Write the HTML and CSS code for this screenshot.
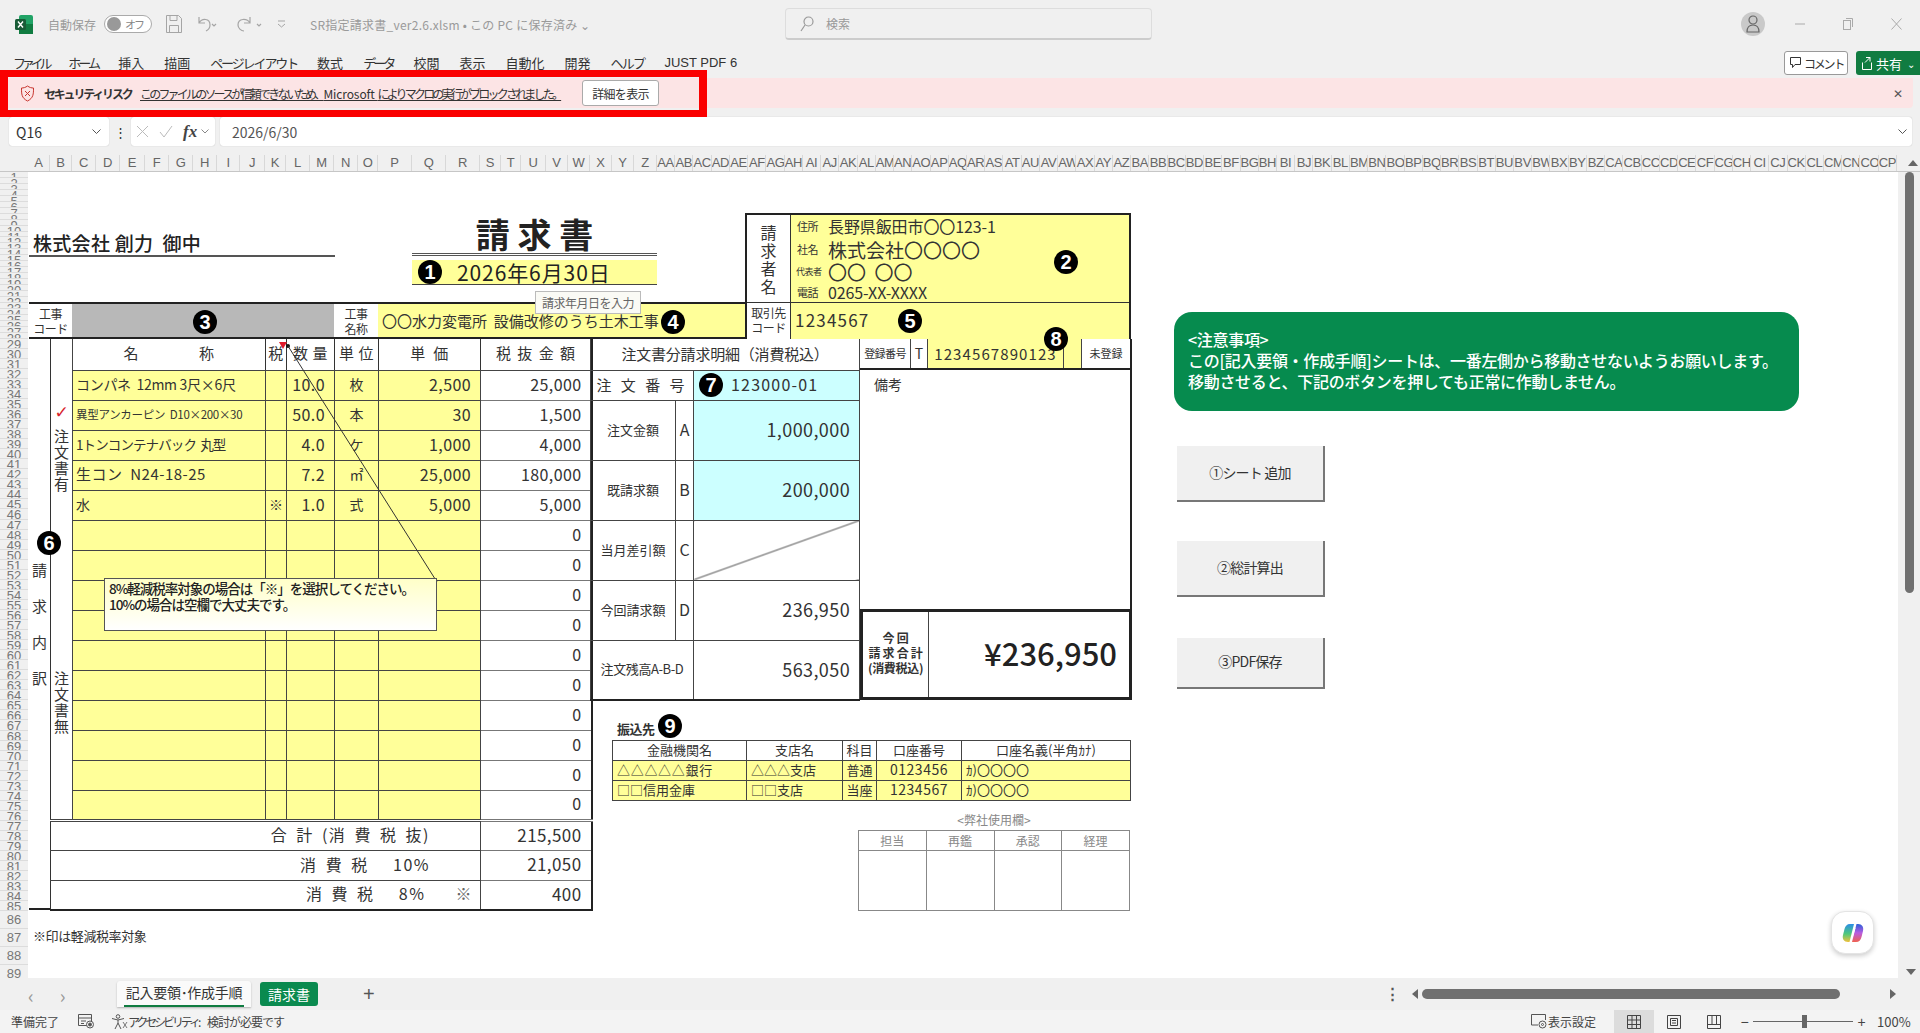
FILE: index.html
```html
<!DOCTYPE html>
<html lang="ja">
<head>
<meta charset="UTF-8">
<title>SR指定請求書_ver2.6.xlsm</title>
<link rel="stylesheet" href="styles.css">
</head>
<body>

<div class="titlebar">
  <svg class="xl-logo" width="18" height="19" viewBox="0 0 18 19"><rect x="4" y="0" width="14" height="19" rx="2" fill="#21a366"/><rect x="4" y="9" width="14" height="10" fill="#107c41"/><rect x="0" y="4" width="11" height="11" rx="1.5" fill="#185c37"/><path d="M3 6.5l5 6M8 6.5l-5 6" stroke="#fff" stroke-width="1.4"/></svg>
  <span class="t-gray t-auto">自動保存</span>
  <span class="toggle"><b></b><em>オフ</em></span>
  <svg class="t-save" width="16" height="18" viewBox="0 0 16 18" fill="none" stroke="#a5a5a5"><path d="M.5.5h12l3 3v14H.5z"/><path d="M4 .5v5h7v-5M3.500 17.500v-7h9v7"/></svg>
  <svg class="t-undo" width="23" height="18" viewBox="0 0 23 18" fill="none" stroke="#a5a5a5" stroke-width="1.2"><path d="M4 2v6h6M4 8c3-5 11-5 11 2 0 3-2 5-4 6"/><path d="M19 9l2 2 2-2" transform="translate(-2 0)"/></svg>
  <svg class="t-redo" width="27" height="18" viewBox="0 0 27 18" fill="none" stroke="#a5a5a5" stroke-width="1.2"><path d="M15 2v6H9M15 8C12 3 3 3 3 10c0 3 3 6 6 6"/><path d="M22 9l2 2 2-2"/></svg>
  <svg class="t-cust" width="9" height="9" viewBox="0 0 9 9" fill="none" stroke="#a5a5a5"><path d="M1 1h7M1 4l3.500 3L8 4"/></svg>
  <span class="t-gray t-file">SR指定請求書_ver2.6.xlsm • この PC に保存済み ⌄</span>
  <div class="search">
    <svg width="14" height="16" viewBox="0 0 14 16" fill="none" stroke="#999" stroke-width="1.2"><circle cx="8.500" cy="5.500" r="4.500"/><path d="M5 9l-4 6"/></svg>
    <span>検索</span>
  </div>
  <div class="avatar"><svg width="14" height="18" viewBox="0 0 14 18" fill="none" stroke="#666" stroke-width="1.200"><circle cx="7" cy="5" r="4"/><path d="M1 17c0-5 2-7 6-7s6 2 6 7z"/></svg></div>
  <div class="winctl">
    <svg width="10" height="10" viewBox="0 0 10 10" stroke="#aaa"><path d="M0 5h10"/></svg>
    <svg width="10" height="12" viewBox="0 0 10 12" fill="none" stroke="#aaa"><rect x=".5" y="2.500" width="7" height="9"/><path d="M3 .5h6.500V9"/></svg>
    <svg width="11" height="12" viewBox="0 0 11 12" stroke="#aaa"><path d="M.5.5l10 11M10.500.5l-10 11"/></svg>
  </div>
</div>

<div class="menubar">
  <nav class="tabs">
    <a class="kana k-file">ファイル</a>
    <a class="kana">ホーム</a>
    <a>挿入</a>
    <a>描画</a>
    <a class="kana k-page">ページレイアウト</a>
    <a>数式</a>
    <a class="kana">データ</a>
    <a>校閲</a>
    <a>表示</a>
    <a>自動化</a>
    <a>開発</a>
    <a class="kana k-help">ヘルプ</a>
    <a class="latin">JUST PDF 6</a>
  </nav>
  <div class="menu-right">
    <button class="comment-btn"><svg width="11" height="12" viewBox="0 0 11 12" fill="none" stroke="#333"><path d="M.5.5h10v7H5L2.500 10.500V7.500h-2z"/></svg>コメント</button>
    <button class="share-btn"><svg width="11" height="13" viewBox="0 0 11 13" fill="none" stroke="#fff"><path d="M.5 5.500v7h9v-7M3 5.500l5-5M8 .5H4M8 .5v4"/></svg>共有<i>⌄</i></button>
  </div>
</div>

<div class="msgbar">
  <svg class="shield" width="15" height="17" viewBox="0 0 15 17" fill="none" stroke="#c8352f"><path d="M7.500 1c2 1.500 4 2 6 2 0 6 0 10-6 13C1.500 13 1.500 9 1.500 3c2 0 4-.5 6-2z"/><path d="M5 6l5 5M10 6l-5 5"/></svg>
  <strong>セキュリティリスク</strong>
  <a>このファイルのソースが信頼できないため、<span>Microsoft </span>によりマクロの実行がブロックされました。</a>
  <button>詳細を表示</button>
  <span class="msg-close">✕</span>
</div>

<div class="fxrow">
  <div class="namebox"><span>Q16</span><svg width="9" height="6" viewBox="0 0 9 6" fill="none" stroke="#555"><path d="M.5.5l4 4 4-4"/></svg></div>
  <span class="fx-dots">⋮</span>
  <div class="fxbtns">
    <svg width="13" height="13" viewBox="0 0 13 13" stroke="#bbb"><path d="M1 1l11 11M12 1L1 12"/></svg>
    <svg width="14" height="13" viewBox="0 0 14 13" fill="none" stroke="#bbb"><path d="M1 7l4 5 8-11"/></svg>
    <em>fx</em>
    <svg width="8" height="5" viewBox="0 0 8 5" fill="none" stroke="#888"><path d="M.5.5l3.500 3.500L7.500.5"/></svg>
  </div>
  <div class="fxinput"><span>2026/6/30</span><svg width="9" height="6" viewBox="0 0 9 6" fill="none" stroke="#555"><path d="M.5.5l4 4 4-4"/></svg></div>
</div>

<div class="colhead">
  <div class="corner"></div>
  <div class="cols">
    <i>A</i><i>B</i><i>C</i><i>D</i><i>E</i><i>F</i><i>G</i><i>H</i><i>I</i><i>J</i><i>K</i><i>L</i><i>M</i><i>N</i><i>O</i><i>P</i><i>Q</i><i>R</i><i>S</i><i>T</i><i>U</i><i>V</i><i>W</i><i>X</i><i>Y</i><i>Z</i>
    <i>AA</i><i>AB</i><i>AC</i><i>AD</i><i>AE</i><i>AF</i><i>AG</i><i>AH</i><i>AI</i><i>AJ</i><i>AK</i><i>AL</i><i>AM</i><i>AN</i><i>AO</i><i>AP</i><i>AQ</i><i>AR</i><i>AS</i><i>AT</i><i>AU</i><i>AV</i><i>AW</i><i>AX</i><i>AY</i><i>AZ</i>
    <i>BA</i><i>BB</i><i>BC</i><i>BD</i><i>BE</i><i>BF</i><i>BG</i><i>BH</i><i>BI</i><i>BJ</i><i>BK</i><i>BL</i><i>BM</i><i>BN</i><i>BO</i><i>BP</i><i>BQ</i><i>BR</i><i>BS</i><i>BT</i><i>BU</i><i>BV</i><i>BW</i><i>BX</i><i>BY</i><i>BZ</i>
    <i>CA</i><i>CB</i><i>CC</i><i>CD</i><i>CE</i><i>CF</i><i>CG</i><i>CH</i><i>CI</i><i>CJ</i><i>CK</i><i>CL</i><i>CM</i><i>CN</i><i>CO</i><i>CP</i>
  </div>
  <div class="vs-up"></div>
</div>

<div class="workarea">
  <div class="rows">
    <i>1</i><i>2</i><i>3</i><i>4</i><i>5</i><i>6</i><i>7</i><i>8</i><i>9</i><i>10</i><i>11</i><i>12</i><i>13</i><i>14</i><i>15</i><i>16</i><i>17</i><i>18</i><i>19</i><i>20</i><i>21</i><i>22</i><i>23</i><i>24</i><i>25</i><i>26</i><i>27</i><i>28</i>
    <i>29</i><i>30</i><i>31</i><i>32</i><i>33</i><i>34</i><i>35</i><i>36</i><i>37</i><i>38</i><i>39</i><i>40</i><i>41</i><i>42</i><i>43</i><i>44</i><i>45</i><i>46</i><i>47</i><i>48</i><i>49</i><i>50</i><i>51</i><i>52</i><i>53</i><i>54</i><i>55</i><i>56</i><i>57</i><i>58</i><i>59</i><i>60</i><i>61</i><i>62</i><i>63</i><i>64</i><i>65</i><i>66</i><i>67</i><i>68</i><i>69</i><i>70</i><i>71</i><i>72</i><i>73</i><i>74</i><i>75</i><i>76</i><i>77</i><i>78</i><i>79</i><i>80</i><i>81</i><i>82</i><i>83</i><i>84</i><i>85</i>
    <i>86</i><i>87</i><i>88</i><i>89</i>
  </div>

  <div class="canvas">
    <div class="invoice">

      <div class="head">
        <div class="head-left">
          <div class="head-top">
            <div class="to-name">株式会社 創力&nbsp;&nbsp;御中</div>
            <div class="title-block">
              <div class="title">請 求 書</div>
              <div class="issue-date">2026年6月30日</div>
            </div>
          </div>
          <div class="kouji">
            <div class="k-label">工事<br>コード</div>
            <div class="k-gray"></div>
            <div class="k-label k-label2">工事<br>名称</div>
            <div class="k-name">〇〇水力変電所&nbsp;&nbsp;設備改修のうち土木工事</div>
          </div>
        </div>
        <div class="issuer">
          <div class="issuer-main">
            <div class="issuer-label"><span>請</span><span>求</span><span>者</span><span>名</span></div>
            <div class="issuer-body">
              <div class="ib-row"><small>住所</small><span class="ib-addr">長野県飯田市〇〇123-1</span></div>
              <div class="ib-row"><small>社名</small><span class="ib-co">株式会社〇〇〇〇</span></div>
              <div class="ib-row"><small class="tiny">代表者</small><span class="ib-co">〇〇&nbsp;&nbsp;〇〇</span></div>
              <div class="ib-row"><small>電話</small><span class="ib-addr">0265-XX-XXXX</span></div>
            </div>
          </div>
          <div class="issuer-code">
            <div class="ic-label">取引先<br>コード</div>
            <div class="ic-val">1234567</div>
          </div>
        </div>
      </div>

      <div class="bodyrow">
        <div class="leftpart">
          <div class="vside">
            <span>請</span><span>求</span><span>内</span><span>訳</span>
          </div>
          <table class="detail">
            <colgroup><col class="c1"><col class="c2"><col class="c3"><col class="c4"><col class="c5"><col class="c6"><col class="c7"></colgroup>
            <tr class="hrow">
              <td rowspan="16" class="order-side">
                <span class="chk">✓</span>
                <span class="os-a">注<br>文<br>書<br>有</span>
                <span class="os-b">注<br>文<br>書<br>無</span>
              </td>
              <th>名<span class="gap-wide"></span>称</th><th>税</th><th>数 量</th><th>単 位</th><th>単&nbsp;&nbsp;価</th><th class="w">税 抜 金 額</th>
            </tr>
            <tr><td class="y n">コンパネ&nbsp;&nbsp;12mm 3尺×6尺</td><td class="y"></td><td class="y q">10.0</td><td class="y u">枚</td><td class="y p">2,500</td><td class="a">25,000</td></tr>
            <tr><td class="y n sm">異型アンカーピン&nbsp;&nbsp;D10×200×30</td><td class="y"></td><td class="y q">50.0</td><td class="y u">本</td><td class="y p">30</td><td class="a">1,500</td></tr>
            <tr><td class="y n n3">1トンコンテナバック&nbsp;&nbsp;丸型</td><td class="y"></td><td class="y q">4.0</td><td class="y u">ケ</td><td class="y p">1,000</td><td class="a">4,000</td></tr>
            <tr><td class="y n n4">生コン&nbsp;&nbsp;N24-18-25</td><td class="y"></td><td class="y q">7.2</td><td class="y u">㎡</td><td class="y p">25,000</td><td class="a">180,000</td></tr>
            <tr><td class="y n">水</td><td class="y u">※</td><td class="y q">1.0</td><td class="y u">式</td><td class="y p">5,000</td><td class="a">5,000</td></tr>
            <tr><td class="y"></td><td class="y"></td><td class="y"></td><td class="y"></td><td class="y"></td><td class="a">0</td></tr>
            <tr><td class="y"></td><td class="y"></td><td class="y"></td><td class="y"></td><td class="y"></td><td class="a">0</td></tr>
            <tr><td class="y"></td><td class="y"></td><td class="y"></td><td class="y"></td><td class="y"></td><td class="a">0</td></tr>
            <tr><td class="y"></td><td class="y"></td><td class="y"></td><td class="y"></td><td class="y"></td><td class="a">0</td></tr>
            <tr><td class="y"></td><td class="y"></td><td class="y"></td><td class="y"></td><td class="y"></td><td class="a">0</td></tr>
            <tr><td class="y"></td><td class="y"></td><td class="y"></td><td class="y"></td><td class="y"></td><td class="a">0</td></tr>
            <tr><td class="y"></td><td class="y"></td><td class="y"></td><td class="y"></td><td class="y"></td><td class="a">0</td></tr>
            <tr><td class="y"></td><td class="y"></td><td class="y"></td><td class="y"></td><td class="y"></td><td class="a">0</td></tr>
            <tr><td class="y"></td><td class="y"></td><td class="y"></td><td class="y"></td><td class="y"></td><td class="a">0</td></tr>
            <tr><td class="y"></td><td class="y"></td><td class="y"></td><td class="y"></td><td class="y"></td><td class="a">0</td></tr>
            <tr class="sum first"><td colspan="6" class="s-label">合 計 (消 費 税 抜)</td><td class="a sum-v">215,500</td></tr>
            <tr class="sum"><td colspan="6" class="s-label">消 費 税&nbsp;&nbsp;&nbsp;10%</td><td class="a sum-v">21,050</td></tr>
            <tr class="sum last"><td colspan="6" class="s-label s-last">消 費 税&nbsp;&nbsp;&nbsp;8%<span>※</span></td><td class="a sum-v">400</td></tr>
          </table>
        </div>

        <div class="rightpart">
          <div class="rp-top">
            <table class="order">
              <colgroup><col class="o1"><col class="o2"><col class="o3"></colgroup>
              <tr class="o-h"><th colspan="3">注文書分請求明細（消費税込）</th></tr>
              <tr class="o-n"><th colspan="2" class="o-no">注 文 番 号</th><td class="cy o-num">123000-01</td></tr>
              <tr><th>注文金額</th><td class="letter">A</td><td class="cy v">1,000,000</td></tr>
              <tr><th>既請求額</th><td class="letter">B</td><td class="cy v">200,000</td></tr>
              <tr><th>当月差引額</th><td class="letter">C</td><td class="diag"></td></tr>
              <tr><th>今回請求額</th><td class="letter">D</td><td class="v">236,950</td></tr>
              <tr><th colspan="2" class="o-bal">注文残高A-B-D</th><td class="v">563,050</td></tr>
            </table>
            <div class="rp-col">
              <div class="reg">
                <div class="r1">登録番号</div>
                <div class="r2">T</div>
                <div class="r3">1234567890123</div>
                <div class="r4"></div>
                <div class="r5">未登録</div>
              </div>
              <div class="memo">備考</div>
              <div class="grand">
                <div class="g-label">今 回<br>請 求 合 計<br>(消費税込)</div>
                <div class="g-val">¥236,950</div>
              </div>
            </div>
          </div>

          <div class="rp-bottom">
            <div class="bank-title">振込先</div>
            <table class="bank">
              <colgroup><col class="b1"><col class="b2"><col class="b3"><col class="b4"><col class="b5"></colgroup>
              <tr><th>金融機関名</th><th>支店名</th><th>科目</th><th>口座番号</th><th>口座名義(半角ｶﾅ)</th></tr>
              <tr><td class="tri">△△△△△銀行</td><td>△△△支店</td><td class="ctr">普通</td><td class="ctr num">0123456</td><td>ｶ)〇〇〇〇</td></tr>
              <tr><td>□□信用金庫</td><td>□□支店</td><td class="ctr">当座</td><td class="ctr num">1234567</td><td>ｶ)〇〇〇〇</td></tr>
            </table>
            <div class="stamp-title">&lt;弊社使用欄&gt;</div>
            <table class="stamp">
              <tr><th>担当</th><th>再鑑</th><th>承認</th><th>経理</th></tr>
              <tr><td></td><td></td><td></td><td></td></tr>
            </table>
          </div>
        </div>
      </div>

      <div class="footnote">※印は軽減税率対象</div>
    </div>

    <aside class="side">
      <div class="notice">
        &lt;注意事項&gt;<br>
        この[記入要領・作成手順]シートは、一番左側から移動させないようお願いします。<br>
        移動させると、下記のボタンを押しても正常に作動しません。
      </div>
      <div class="macro m1">①シート 追加</div>
      <div class="macro m2">②総計算出</div>
      <div class="macro m3">③PDF保存</div>
    </aside>

    <!-- over the cells -->
    <span class="badge b-1">1</span>
    <span class="badge b-2">2</span>
    <span class="badge b-3">3</span>
    <span class="badge b-4">4</span>
    <span class="badge b-5">5</span>
    <span class="badge b-6">6</span>
    <span class="badge b-7">7</span>
    <span class="badge b-8">8</span>
    <span class="badge b-9">9</span>
    <div class="tip">請求年月日を入力</div>
    <svg class="leader" width="160" height="245" viewBox="0 0 160 245"><path d="M0 3l8 0-4 7z" fill="#e01b2c"/><circle cx="9" cy="7" r="2" fill="#111"/><path d="M9 7L158 243" stroke="#333" fill="none"/></svg>
    <div class="callout">8%軽減税率対象の場合は「※」を選択してください。<br>10%の場合は空欄で大丈夫です。</div>
    <div class="copilot"><svg width="22" height="20" viewBox="0 0 22 20"><defs><linearGradient id="cpa" x1="0" y1="0" x2="0" y2="1"><stop offset="0" stop-color="#2a8ee8"/><stop offset=".55" stop-color="#4fc87a"/><stop offset="1" stop-color="#f2c23c"/></linearGradient><linearGradient id="cpb" x1="0" y1="0" x2="0" y2="1"><stop offset="0" stop-color="#2b5fd9"/><stop offset=".5" stop-color="#b85ce0"/><stop offset="1" stop-color="#f0604f"/></linearGradient></defs><path d="M8 1h4L7.500 19H6C2 19 0 16 1 12l1.500-6C3.200 3 5 1 8 1z" fill="url(#cpa)"/><path d="M14 19h-4l4.500-18H16c4 0 6 3 5 7l-1.500 6c-.7 3-2.500 5-5.500 5z" fill="url(#cpb)"/><path d="M12.500 5l-3 10h1l3-10z" fill="#fff"/></svg></div>
  </div>

  <div class="vscroll"><b></b><u></u></div>
</div>

<div class="sheetbar">
  <span class="nav-arrows"><i>‹</i><i>›</i></span>
  <div class="stab active"><span>記入要領･作成手順</span></div>
  <div class="stab green">請求書</div>
  <span class="add">+</span>
  <span class="sb-dots">⋮</span>
  <div class="hscroll"><i class="al"></i><b></b><i class="ar"></i></div>
</div>

<div class="statusbar">
  <span class="st-ready">準備完了</span>
  <svg class="st-macro" width="16" height="15" viewBox="0 0 16 15" fill="none" stroke="#555"><path d="M.5.5h13v11h-13zM.5 4h13M3 7h5M3 9.500h3"/><circle cx="12" cy="10.500" r="3.500" fill="#f0f0f0"/><circle cx="12" cy="10.500" r="1.500" fill="#555"/></svg>
  <svg class="st-acc" width="17" height="16" viewBox="0 0 17 16" fill="none" stroke="#555"><circle cx="7" cy="2.500" r="1.800"/><path d="M1 4.500l6 1.500 6-1.500M7 6v3l-3 6M7 9l3 6"/><path d="M12 8l4 6M16 8l-4 6" stroke="#777"/></svg>
  <span class="st-acc-k">アクセシビリティ:</span>
  <span class="st-acc-t">検討が必要です</span>
  <div class="st-right">
    <svg class="st-disp" width="17" height="15" viewBox="0 0 17 15" fill="none" stroke="#555"><path d="M7 11H.5V.5h14V6"/><circle cx="11.500" cy="10.500" r="3.500"/><circle cx="11.500" cy="10.500" r="1"/></svg>
    <span class="st-disp-t">表示設定</span>
    <span class="view on"><svg width="14" height="14" viewBox="0 0 14 14" fill="none" stroke="#444"><path d="M.5.5h13v13H.5zM.5 5h13M.5 9.500h13M5 .5v13M9.500.5v13"/></svg></span>
    <span class="view"><svg width="14" height="14" viewBox="0 0 14 14" fill="none" stroke="#444"><path d="M.5.5h13v13H.5zM3.500 3.500h7v7h-7zM5 5.500h4M5 8h4"/></svg></span>
    <span class="view"><svg width="14" height="14" viewBox="0 0 14 14" fill="none" stroke="#444"><path d="M.5.5h13v13H.5zM.5 9.500h13M5 .5v9M9.500.5v9"/></svg></span>
    <span class="zm zm-minus">−</span>
    <span class="slider"><b></b></span>
    <span class="zm">+</span>
    <span class="pct">100%</span>
  </div>
</div>

<!-- red frame the author drew on the screenshot -->
<div class="redframe"></div>

</body>
</html>
```

FILE: styles.css
```css
html, body {
	margin: 0;
	padding: 0;
}
body {
	position: relative;
	width: 1920px;
	height: 1033px;
	overflow: hidden;
	background: #f0f0f0;
	color: #333;
	font-family: "Noto Sans CJK JP", "Liberation Sans", sans-serif;
	font-size: 13px;
}
i, em {
	font-style: normal;
}
table {
	border-collapse: collapse;
	table-layout: fixed;
}
th {
	font-weight: normal;
}
td, th {
	padding: 0;
	box-sizing: border-box;
}

/* title bar */
.titlebar {
	height: 48px;
	display: flex;
	align-items: center;
}
.xl-logo { margin-left: 15px; }
.t-gray { color: #9a9a9a; white-space: nowrap; }
.t-auto { margin-left: 15px; width: 50px; font-size: 12px; letter-spacing: 0; }
.toggle {
	margin-left: 6px;
	width: 48px;
	height: 18px;
	border: 1px solid #aaa;
	border-radius: 10px;
	background: #fff;
	display: flex;
	align-items: center;
	box-sizing: border-box;
	color: #888;
	font-size: 11px;
}
.toggle b {
	width: 14px;
	height: 14px;
	margin: 0 4px 0 2px;
	border-radius: 50%;
	background: #999;
}
.toggle em { letter-spacing: -2px; }
.t-save { margin-left: 14px; }
.t-undo { margin-left: 13px; }
.t-redo { margin-left: 17px; }
.t-cust { margin-left: 15px; }
.t-file { margin-left: 24px; width: 280px; font-size: 12px; letter-spacing: .25px; }
.search {
	margin-left: 195px;
	width: 367px;
	height: 32px;
	box-sizing: border-box;
	border: 1px solid #ddd;
	border-bottom: 2px solid #ccc;
	border-radius: 4px;
	display: flex;
	align-items: center;
	padding-left: 14px;
	gap: 12px;
	color: #999;
	font-size: 12px;
}
.avatar {
	margin-left: 589px;
	width: 24px;
	height: 24px;
	border-radius: 50%;
	background: #c9c9c9;
	display: flex;
	align-items: center;
	justify-content: center;
}
.winctl {
	margin-left: 30px;
	display: flex;
	align-items: center;
	gap: 38px;
}

/* tab row */
.menubar {
	height: 30px;
	display: flex;
	justify-content: space-between;
}
.tabs {
	display: flex;
	gap: 20px;
	padding: 6px 0 0 13px;
	font-size: 13px;
	line-height: 18px;
	white-space: nowrap;
}
.tabs .kana { letter-spacing: -2.900px; }
.tabs .k-file { letter-spacing: -4.200px; }
.tabs .k-page { letter-spacing: -2.100px; }
.tabs .k-help { letter-spacing: -1.700px; }
.tabs .latin { font-family: "Liberation Sans", sans-serif; }
.menu-right {
	display: flex;
	gap: 8px;
	padding-top: 3px;
	height: 24px;
}
.comment-btn, .share-btn {
	height: 24px;
	box-sizing: border-box;
	font: inherit;
	font-size: 12px;
	display: flex;
	align-items: center;
	padding: 0;
	white-space: nowrap;
}
.comment-btn {
	width: 64px;
	border: 1px solid #999;
	border-radius: 3px;
	background: #fff;
	color: #333;
	padding-left: 5px;
	gap: 3px;
	letter-spacing: -2.2px;
}
.share-btn {
	width: 64px;
	border: 0;
	border-radius: 3px 0 0 3px;
	background: #107c41;
	color: #fff;
	padding-left: 6px;
	gap: 3px;
	font-size: 13px;
}
.share-btn i { font-size: 10px; margin-left: 2px; }

/* message bar */
.msgbar {
	height: 30px;
	margin-right: 7px;
	background: #fce4e5;
	border-radius: 0 0 4px 0;
	display: flex;
	align-items: center;
	font-size: 12px;
	white-space: nowrap;
	position: relative;
}
.shield { margin-left: 20px; }
.msgbar strong { margin-left: 9px; width: 90px; letter-spacing: -2.2px; font-weight: 700; }
.msgbar a { margin-left: 6px; width: 442px; text-decoration: underline; letter-spacing: -2.800px; }
.msgbar a span { letter-spacing: -.1px; }
.msgbar button {
	width: 77px;
	height: 26px;
	border: 1px solid #aaa;
	border-radius: 3px;
	background: #fff;
	font: inherit;
	color: #333;
	padding: 0;
	letter-spacing: -.7px;
}
.msg-close { position: absolute; right: 10px; top: 6px; color: #555; font-size: 12px; }

/* formula row */
.fxrow {
	height: 29px;
	margin: 9px 8px 9px 9px;
	display: flex;
	align-items: stretch;
}
.namebox, .fxbtns, .fxinput {
	background: #fff;
	border-radius: 3px;
	box-shadow: 0 0 1px #aaa;
	display: flex;
	align-items: center;
}
.namebox {
	width: 100px;
	padding: 0 8px 0 7px;
	box-sizing: border-box;
	justify-content: space-between;
	font-size: 14px;
}
.fx-dots { width: 22px; text-align: center; line-height: 29px; }
.fxbtns {
	width: 84px;
	padding: 0 5px;
	box-sizing: border-box;
	gap: 10px;
}
.fxbtns em {
	font-family: "Liberation Serif", serif;
	font-style: italic;
	font-weight: 700;
	font-size: 17px;
	color: #444;
}
.fxbtns svg:last-child { margin-left: -6px; }
.fxinput {
	flex: 1;
	margin-left: 5px;
	padding: 0 5px 0 12px;
	justify-content: space-between;
	font-size: 14px;
	color: #555;
}

/* column and row headers */
.colhead {
	height: 17px;
	box-sizing: border-box;
	display: flex;
	border-bottom: 1px solid #c6c6c6;
}
.corner { width: 28px; }
.cols {
	width: 1870px;
	display: grid;
	grid-template-columns: 22px 22px 24px 24px 25px 24px 24px 24px 23px 25px 21px 24px 24px 24px 20px 34px 34px 34px 21px 20px 25px 22px 22px 22px 22px 23px repeat(68, 18.235px);
}
.cols i {
	overflow: hidden;
	text-align: center;
	font-family: "Liberation Sans", sans-serif;
	font-size: 13px;
	line-height: 16px;
	color: #666;
	border-right: 1px solid #d8d8d8;
	white-space: nowrap;
	letter-spacing: -.4px;
}
.vs-up {
	margin: 5px 0 0 10px;
	width: 0;
	height: 0;
	border: 5px solid transparent;
	border-top: 0;
	border-bottom: 6px solid #666;
}
.workarea {
	height: 806px;
	display: flex;
}
.rows {
	width: 28px;
	flex: none;
	display: grid;
	grid-template-rows: repeat(28, 5.96px) repeat(57, 10.05px) repeat(4, 17.8px);
	height: 806px;
	overflow: hidden;
}
.rows i {
	overflow: hidden;
	text-align: center;
	font-family: "Liberation Sans", sans-serif;
	font-size: 13px;
	line-height: 11px;
	color: #777;
	border-bottom: 1px solid #dcdcdc;
	min-height: 0;
}
.rows i:nth-child(n+86) { line-height: 18px; }

/* the sheet */
.canvas {
	position: relative;
	width: 1870px;
	height: 806px;
	flex: none;
	background: #fff;
	display: flex;
	overflow: hidden;
	color: #333;
}
.invoice {
	width: 1102px;
	margin-left: 1px;
	flex: none;
}
.head {
	display: flex;
	height: 167px;
}
.head-left { width: 716px; flex: none; }
.head-top {
	height: 130px;
	display: flex;
}
.to-name {
	width: 306px;
	height: 85px;
	box-sizing: border-box;
	padding: 58px 0 0 4px;
	font-size: 19px;
	font-weight: 500;
	line-height: 26px;
	color: #222;
	border-bottom: 2px solid #555;
	letter-spacing: .3px;
	white-space: nowrap;
}
.title-block {
	margin-left: 77px;
	width: 245px;
}
.title {
	height: 84px;
	box-sizing: border-box;
	padding-top: 42px;
	font-size: 34px;
	line-height: 40px;
	font-weight: 700;
	text-align: center;
	color: #222;
	border-bottom: 3px double #555;
}
.issue-date {
	margin-top: 4px;
	height: 24px;
	background: #ffff99;
	border-bottom: 1px solid #444;
	padding-left: 45px;
	font-size: 21px;
	line-height: 24px;
	color: #222;
	letter-spacing: .9px;
}
.kouji {
	height: 37px;
	box-sizing: border-box;
	display: flex;
	border-top: 2px solid #222;
	border-bottom: 2px solid #222;
}
.k-label {
	width: 43px;
	flex: none;
	text-align: center;
	font-size: 12px;
	line-height: 15px;
	padding-top: 2px;
	box-sizing: border-box;
	letter-spacing: -.5px;
}
.k-label2 { width: 44px; }
.k-gray { width: 262px; flex: none; background: #b8b8b8; }
.k-name {
	flex: 1;
	background: #ffff99;
	padding-left: 4px;
	font-size: 15px;
	line-height: 34px;
	white-space: nowrap;
}
.issuer {
	width: 386px;
	flex: none;
	margin-top: 41px;
	height: 126px;
	box-sizing: border-box;
	border: solid #222;
	border-width: 2px 2px 0 2px;
}
.issuer-main {
	height: 88px;
	display: flex;
	box-sizing: border-box;
	border-bottom: 1px solid #333;
}
.issuer-label {
	width: 44px;
	flex: none;
	display: flex;
	flex-direction: column;
	align-items: center;
	justify-content: center;
	font-size: 16px;
	line-height: 18px;
	border-right: 1px solid #333;
	box-sizing: border-box;
}
.issuer-body {
	flex: 1;
	background: #ffff99;
	padding-left: 5px;
	display: grid;
	grid-template-rows: 22px 24px 21px 20px;
}
.ib-row {
	display: flex;
	align-items: center;
	white-space: nowrap;
}
.ib-row small {
	width: 32px;
	font-size: 11px;
	letter-spacing: -.5px;
	padding-left: 1px;
	box-sizing: border-box;
}
.ib-row small.tiny { font-size: 9px; padding-left: 0; }
.ib-addr { font-size: 16px; letter-spacing: -.1px; }
.ib-co { font-size: 19px; }
.issuer-code {
	height: 36px;
	display: flex;
}
.ic-label {
	width: 44px;
	flex: none;
	text-align: center;
	font-size: 12px;
	line-height: 15px;
	padding-top: 2px;
	box-sizing: border-box;
	border-right: 1px solid #333;
	letter-spacing: -.5px;
}
.ic-val {
	flex: 1;
	background: #ffff99;
	padding-left: 4px;
	font-size: 17px;
	line-height: 34px;
	letter-spacing: 1.200px;
}
.bodyrow {
	display: flex;
}
.leftpart {
	display: flex;
	width: 561px;
	flex: none;
}
.vside {
	width: 21px;
	flex: none;
	height: 571px;
	padding-top: 220px;
	box-sizing: border-box;
	display: flex;
	flex-direction: column;
	align-items: center;
	font-size: 15px;
	gap: 14px;
	line-height: 22px;
	border-bottom: 2px solid #222;
}
.detail {
	width: 541px;
	border-right: 2px solid #222;
	border-bottom: 2px solid #222;
}
.c1 { width: 22px; }
.c2 { width: 193px; }
.c3 { width: 21px; }
.c4 { width: 48px; }
.c5 { width: 44px; }
.c6 { width: 102px; }
.c7 { width: 111px; }
.detail td, .detail th {
	border: 1px solid #444;
	height: 30px;
	padding-bottom: 3px;
	white-space: nowrap;
	overflow: hidden;
}
.detail .hrow th {
	height: 31px;
	font-size: 15px;
	text-align: center;
	letter-spacing: .5px;
	border-top: 0;
	border-right: 1px solid #333;
}
.gap-wide { display: inline-block; width: 60px; }
.detail th.w { word-spacing: 2px; }
.detail .order-side {
	position: relative;
	vertical-align: top;
	border-top: 0;
	border-left: 1px solid #333;
	padding-bottom: 0;
}
.order-side span { display: block; text-align: center; }
.chk {
	margin-top: 62px;
	color: #d81e2c;
	font-size: 17px;
	font-weight: 700;
	line-height: 22px;
	font-family: "DejaVu Sans", sans-serif;
}
.os-a {
	margin-top: 5px;
	font-size: 15px;
	line-height: 16px;
}
.os-b {
	margin-top: 178px;
	font-size: 15px;
	line-height: 16px;
}
.y { background: #ffff99; }
.n {
	font-size: 14px;
	padding-left: 3px !important;
	letter-spacing: -.3px;
}
.sm { font-size: 11.5px; }
.n3 { font-size: 13.5px; letter-spacing: -.9px; }
.n4 { font-size: 15px; letter-spacing: .5px; }
.q, .p, .a {
	text-align: right;
	font-size: 16px;
	letter-spacing: .4px;
}
.q { padding-right: 9px !important; }
.p { padding-right: 9px !important; }
.a {
	padding-right: 9px !important;
	border-color: #777 !important;
}
.u { text-align: center; font-size: 14px; }
.sum .s-label {
	text-align: right;
	padding-right: 50px;
	font-size: 16px;
	letter-spacing: 1.5px;
	word-spacing: 3px;
	border-left: 1px solid #333;
}
.sum.first td {
	border-top: 3px double #444;
}
.sum.last td { height: 29px; }
.s-last { padding-right: 7px !important; }
.s-last span { margin-left: 30px; color: #666; }
.sum-v { font-size: 17px !important; }

.rightpart {
	width: 541px;
	flex: none;
}
.rp-top {
	display: flex;
	height: 361px;
}
.order {
	width: 269px;
	height: 361px;
	flex: none;
	border-bottom: 2px solid #222;
}
.o1 { width: 85px; }
.o2 { width: 18px; }
.o3 { width: 166px; }
.order th, .order td {
	border: 1px solid #444;
	height: 60px;
	padding-bottom: 2px;
	text-align: center;
	font-size: 13px;
	white-space: nowrap;
}
.order .o-h th { height: 31px; font-size: 15px; border-top: 0; letter-spacing: -.2px; }
.order .o-n th, .order .o-n td { height: 30px; }
.o-no { font-size: 15px !important; letter-spacing: 3px; }
.o-bal { font-size: 13px !important; letter-spacing: -.4px; }
.cy { background: #ccffff; }
.o-num {
	text-align: left !important;
	padding-left: 37px !important;
	font-size: 16px !important;
	letter-spacing: 1.200px;
}
.letter { font-size: 16px !important; }
.order .v {
	text-align: right;
	padding-right: 9px;
	font-size: 18px;
	letter-spacing: .4px;
}
.diag {
	background: linear-gradient(to bottom right, #fff calc(50% - 1px), #555 50%, #fff calc(50% + 1px));
}
.rp-col {
	width: 272px;
	flex: none;
	display: flex;
	flex-direction: column;
}
.reg {
	height: 31px;
	flex: none;
	display: flex;
	border-right: 2px solid #222;
	border-bottom: 2px solid #222;
	box-sizing: border-box;
	line-height: 29px;
	text-align: center;
	font-size: 11px;
}
.reg div {
	box-sizing: border-box;
	border-right: 1px solid #444;
}
.r1 { width: 51px; letter-spacing: -.6px; }
.r2 { width: 17px; font-size: 14px; }
.r3 {
	width: 136px;
	background: #ffff99;
	font-size: 15px;
	letter-spacing: 1.100px;
	white-space: nowrap;
}
.r4 { width: 18px; background: #ffff99; }
.reg .r5 { flex: 1; border-right: 0; font-size: 11px; }
.memo {
	flex: 1;
	padding: 3px 0 0 14px;
	font-size: 14px;
	line-height: 22px;
	border-right: 2px solid #222;
}
.grand {
	height: 91px;
	flex: none;
	display: flex;
	box-sizing: border-box;
	border: 3px solid #222;
}
.g-label {
	width: 66px;
	flex: none;
	box-sizing: border-box;
	border-right: 1px solid #444;
	text-align: center;
	font-size: 12px;
	font-weight: 700;
	line-height: 15px;
	padding-top: 18px;
	white-space: nowrap;
	letter-spacing: -.3px;
}
.g-val {
	flex: 1;
	text-align: right;
	padding-right: 12px;
	font-size: 31px;
	font-weight: 500;
	line-height: 82px;
	color: #222;
}
.rp-bottom {
	padding: 0 0 0 22px;
	position: relative;
}
.bank-title {
	height: 40px;
	box-sizing: border-box;
	padding: 19px 0 0 5px;
	font-size: 13px;
	line-height: 20px;
	font-weight: 700;
	letter-spacing: -.5px;
}
.bank { width: 518px; }
.b1 { width: 134px; }
.b2 { width: 96px; }
.b3 { width: 34px; }
.b4 { width: 85px; }
.b5 { width: 169px; }
.bank th, .bank td {
	border: 1px solid #444;
	height: 20px;
	padding-bottom: 3px;
	font-size: 13px;
	line-height: 15px;
	white-space: nowrap;
}
.bank td { background: #ffff99; padding-left: 4px; }
.bank .ctr { text-align: center; padding-left: 0; }
.bank .num { font-size: 14px; letter-spacing: .5px; }
.bank .tri { letter-spacing: .7px; }
.stamp-title {
	width: 272px;
	margin: 10px 0 0 246px;
	height: 18px;
	text-align: center;
	color: #888;
	font-size: 12px;
	line-height: 18px;
}
.stamp {
	width: 272px;
	margin: 1px 0 0 246px;
}
.stamp th, .stamp td {
	border: 1px solid #888;
	height: 60px;
}
.stamp th {
	height: 20px;
	font-size: 12px;
	line-height: 16px;
	color: #888;
}
.footnote {
	margin-top: 16px;
	padding-left: 4px;
	font-size: 13px;
	line-height: 18px;
	letter-spacing: -.4px;
}

/* shapes right of the form */
.side {
	margin-left: 43px;
	width: 625px;
	flex: none;
	padding-top: 140px;
}
.notice {
	height: 99px;
	box-sizing: border-box;
	padding: 17px 14px 0;
	border-radius: 18px;
	background: #068b4e;
	color: #fff;
	font-size: 16px;
	font-weight: 500;
	line-height: 21px;
	letter-spacing: -.3px;
}
.macro {
	width: 148px;
	height: 56px;
	box-sizing: border-box;
	margin-left: 3px;
	background: #f0f0f0;
	border-right: 2px solid #777;
	border-bottom: 2px solid #777;
	text-align: center;
	font-size: 14px;
	line-height: 52px;
	letter-spacing: -.8px;
}
.m1 { margin-top: 35px; }
.m2 { margin-top: 39px; }
.m3 { margin-top: 41px; height: 51px; line-height: 47px; }

/* things that lie over the cells */
.badge {
	position: absolute;
	width: 24px;
	height: 24px;
	border-radius: 50%;
	background: #000;
	color: #fff;
	font-family: "Liberation Sans", sans-serif;
	font-size: 20px;
	font-weight: 700;
	line-height: 24px;
	text-align: center;
}
.b-1 { left: 390px; top: 88px; }
.b-2 { left: 1026px; top: 78px; }
.b-3 { left: 165px; top: 138px; }
.b-4 { left: 633px; top: 138px; }
.b-5 { left: 870px; top: 137px; }
.b-6 { left: 9px; top: 359px; }
.b-7 { left: 671px; top: 201px; }
.b-8 { left: 1016px; top: 155px; }
.b-9 { left: 630px; top: 542px; }
.tip {
	position: absolute;
	left: 507px;
	top: 119px;
	width: 106px;
	height: 23px;
	box-sizing: border-box;
	background: #fafaf5;
	border: 1px solid #bbb;
	text-align: center;
	font-size: 12px;
	line-height: 21px;
	color: #666;
	letter-spacing: -.5px;
}
.leader {
	position: absolute;
	left: 251px;
	top: 167px;
}
.callout {
	position: absolute;
	left: 76px;
	top: 406px;
	width: 333px;
	height: 53px;
	box-sizing: border-box;
	padding: 1px 4px;
	border: 1px solid #555;
	background: linear-gradient(#ffffc8, #fff);
	color: #222;
	font-size: 13.5px;
	line-height: 16px;
	font-weight: 500;
	letter-spacing: -1px;
	white-space: nowrap;
}
.copilot {
	position: absolute;
	left: 1803px;
	top: 739px;
	width: 43px;
	height: 43px;
	box-sizing: border-box;
	background: #fff;
	border: 1px solid #e4e4e4;
	border-radius: 14px;
	box-shadow: 0 2px 5px rgba(0,0,0,.2);
	display: flex;
	align-items: center;
	justify-content: center;
}

/* scroll bars */
.vscroll {
	flex: 1;
	position: relative;
}
.vscroll b {
	display: block;
	margin: 0 0 0 7px;
	width: 9px;
	height: 421px;
	border-radius: 5px;
	background: #707070;
}
.vscroll u {
	position: absolute;
	left: 8px;
	bottom: 3px;
	width: 0;
	height: 0;
	border: 5px solid transparent;
	border-bottom: 0;
	border-top: 6px solid #666;
}
.sheetbar {
	height: 32px;
	display: flex;
	align-items: center;
	position: relative;
}
.nav-arrows {
	width: 117px;
	flex: none;
	display: flex;
	padding-left: 28px;
	gap: 26px;
	box-sizing: border-box;
	font-size: 19px;
	color: #999;
}
.stab {
	height: 26px;
	box-sizing: border-box;
	text-align: center;
	white-space: nowrap;
}
.stab.active {
	width: 134px;
	background: #fafafa;
	box-shadow: 0 1px 2px rgba(0,0,0,.25);
	border-radius: 3px 3px 0 0;
	font-size: 14px;
	line-height: 22px;
	letter-spacing: -.3px;
}
.stab.active span {
	display: block;
	margin: 0 7px;
	border-bottom: 2px solid #107c41;
	height: 24px;
}
.stab.green {
	margin-left: 9px;
	width: 58px;
	height: 24px;
	border-radius: 3px;
	background: #0a8a4f;
	color: #fff;
	font-size: 14px;
	line-height: 24px;
}
.add { margin-left: 45px; font-size: 20px; color: #555; font-family: "Liberation Sans", sans-serif; }
.sb-dots { position: absolute; left: 1385px; top: 4px; font-size: 15px; font-weight: 700; color: #555; }
.hscroll {
	position: absolute;
	left: 1410px;
	top: 9px;
	width: 490px;
	height: 14px;
	display: flex;
	align-items: center;
}
.hscroll b {
	margin-left: 4px;
	width: 418px;
	height: 10px;
	border-radius: 5px;
	background: #707070;
}
.hscroll .al, .hscroll .ar {
	width: 0;
	height: 0;
	border: 5px solid transparent;
}
.hscroll .al { margin-left: 2px; border-left: 0; border-right: 6px solid #666; }
.hscroll .ar { margin-left: 50px; border-right: 0; border-left: 6px solid #666; }

/* status bar */
.statusbar {
	height: 23px;
	display: flex;
	align-items: center;
	background: #f3f3f3;
	font-size: 12px;
	white-space: nowrap;
	color: #444;
}
.st-ready { margin-left: 11px; width: 48px; letter-spacing: 0; }
.st-macro { margin-left: 19px; }
.st-acc { margin-left: 17px; }
.st-acc-k { margin-left: 0; width: 79px; letter-spacing: -3.100px; }
.st-acc-t { letter-spacing: -1px; }
.st-right {
	margin-left: auto;
	display: flex;
	align-items: center;
	height: 23px;
}
.st-disp-t { width: 66px; font-size: 12px; }
.view {
	width: 40px;
	height: 23px;
	display: flex;
	align-items: center;
	justify-content: center;
}
.view.on { background: #dcdcdc; }
.zm {
	width: 9px;
	margin: 0 4px;
	text-align: center;
	font-family: "Liberation Sans", sans-serif;
	font-size: 14px;
}
.zm-minus { margin-left: 6px; }
.slider {
	width: 100px;
	height: 1px;
	background: #666;
	position: relative;
}
.slider b {
	position: absolute;
	left: 49px;
	top: -6px;
	width: 5px;
	height: 13px;
	background: #666;
}
.pct { margin: 0 10px 0 7px; width: 33px; font-size: 13px; }

.redframe {
	position: absolute;
	left: 0;
	top: 70px;
	width: 707px;
	height: 47px;
	box-sizing: border-box;
	border: solid #fa0000;
	border-width: 7px 8px;
}
```
